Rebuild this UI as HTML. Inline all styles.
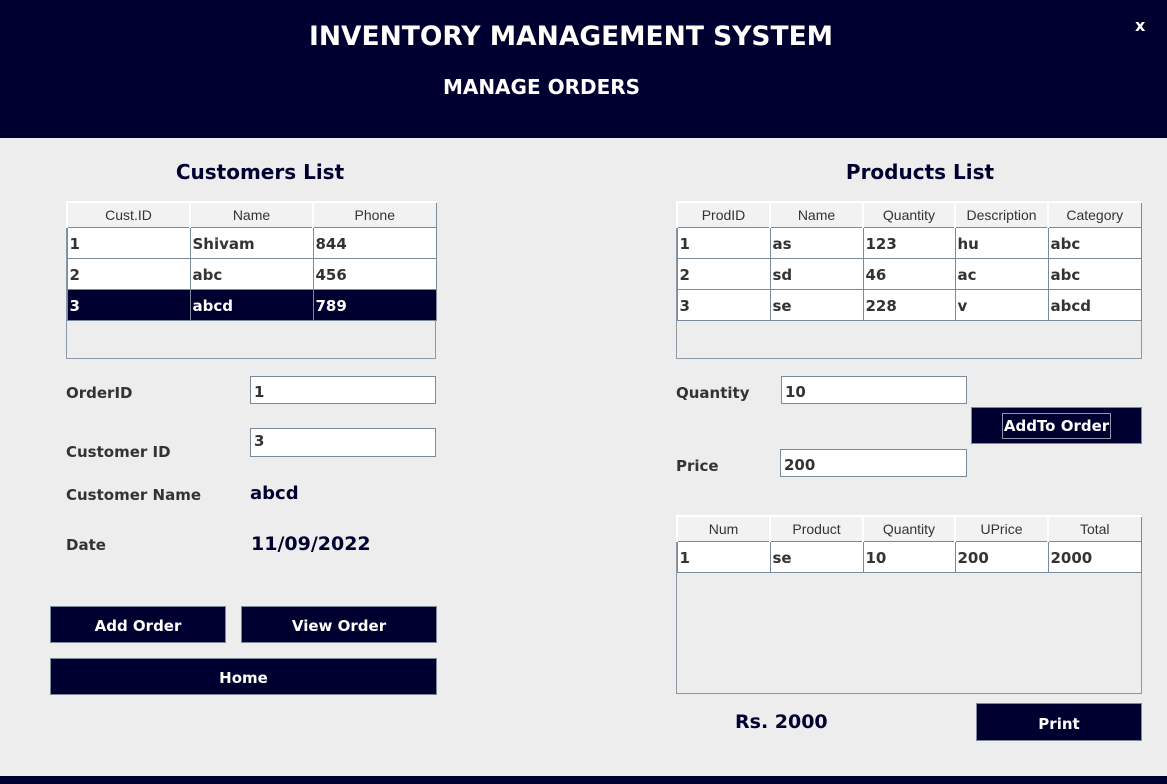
<!DOCTYPE html>
<html><head><style>
*{margin:0;padding:0;box-sizing:border-box}
body{width:1167px;height:784px;background:#ededed;position:relative;overflow:hidden;font-family:"DejaVu Sans","Liberation Sans",sans-serif}
.a{position:absolute}
.hdr{left:0;top:0;width:1167px;height:138px;background:#000030}
.t1{color:#fff;font-weight:bold;font-size:26.5px;left:0;width:1142px;text-align:center;top:21px}
.t2{color:#fff;font-weight:bold;font-size:20px;left:0;width:1083px;text-align:center;top:75px}
.lbl{color:#333;font-weight:bold;font-size:15px}
.h2{color:#000030;font-weight:bold;font-size:20px;text-align:center}
.inp{background:#fff;border:1px solid #7a8a9a;font-weight:bold;font-size:15px;color:#333;padding:7px 3px 0;line-height:16px}
.btn{background:#000030;border:1px solid #7a8a9a;color:#fff;font-weight:bold;font-size:15px;text-align:center}
table{border-collapse:collapse;position:absolute;table-layout:fixed}
td,th{border:1px solid #7a8a9a;overflow:hidden;white-space:nowrap}
th{background:#f2f2f2;font-family:"Liberation Sans",sans-serif;font-weight:normal;font-size:14px;color:#333;height:25px;border-top:2px solid #fff;border-left:2px solid #fff}
td{background:#fff;font-weight:bold;font-size:15px;color:#333;height:31px;padding-left:2px;padding-top:2px}
tr.sel td{background:#000030;color:#fff}
.box{border:1px solid #8a98a8;background:#ededed}
</style></head><body>
<div class="a hdr"></div>
<div class="a t1">INVENTORY MANAGEMENT SYSTEM</div>
<div class="a t2">MANAGE ORDERS</div>
<div class="a" style="color:#fff;font-weight:bold;font-size:16px;left:1135px;top:16px">x</div>

<div class="a h2" style="left:66px;width:388px;top:160px">Customers List</div>
<div class="a h2" style="left:700px;width:440px;top:160px">Products List</div>

<div class="a box" style="left:66px;top:201px;width:370px;height:158px"></div>
<table style="left:66px;top:201px;width:369px">
<col style="width:123px"><col style="width:123px"><col style="width:123px">
<tr><th>Cust.ID</th><th>Name</th><th>Phone</th></tr>
<tr><td>1</td><td>Shivam</td><td>844</td></tr>
<tr><td>2</td><td>abc</td><td>456</td></tr>
<tr class="sel"><td>3</td><td>abcd</td><td>789</td></tr>
</table>

<div class="a box" style="left:676px;top:201px;width:466px;height:158px"></div>
<table style="left:676px;top:201px;width:464px">
<col style="width:93px"><col style="width:93px"><col style="width:92px"><col style="width:93px"><col style="width:93px">
<tr><th>ProdID</th><th>Name</th><th>Quantity</th><th>Description</th><th>Category</th></tr>
<tr><td>1</td><td>as</td><td>123</td><td>hu</td><td>abc</td></tr>
<tr><td>2</td><td>sd</td><td>46</td><td>ac</td><td>abc</td></tr>
<tr><td>3</td><td>se</td><td>228</td><td>v</td><td>abcd</td></tr>
</table>

<div class="a lbl" style="left:66px;top:384px">OrderID</div>
<div class="a inp" style="left:250px;top:376px;width:186px;height:28px">1</div>
<div class="a lbl" style="left:66px;top:443px">Customer ID</div>
<div class="a inp" style="left:250px;top:428px;width:186px;height:29px;padding-top:4px">3</div>
<div class="a lbl" style="left:66px;top:486px">Customer Name</div>
<div class="a" style="left:250px;top:483px;font-weight:bold;font-size:18px;color:#000030">abcd</div>
<div class="a lbl" style="left:66px;top:536px">Date</div>
<div class="a" style="left:251px;top:533px;font-weight:bold;font-size:19px;color:#000030">11/09/2022</div>

<div class="a btn" style="left:50px;top:606px;width:176px;height:37px;line-height:38px">Add Order</div>
<div class="a btn" style="left:241px;top:606px;width:196px;height:37px;line-height:38px">View Order</div>
<div class="a btn" style="left:50px;top:658px;width:387px;height:37px;line-height:38px">Home</div>

<div class="a lbl" style="left:676px;top:384px">Quantity</div>
<div class="a inp" style="left:781px;top:376px;width:186px;height:28px">10</div>
<div class="a btn" style="left:971px;top:407px;width:171px;height:37px;"><span style="display:inline-block;margin-top:5px;border:1px solid #8a98a8;padding:0 1px;line-height:24px">AddTo Order</span></div>
<div class="a lbl" style="left:676px;top:457px">Price</div>
<div class="a inp" style="left:780px;top:449px;width:187px;height:28px">200</div>

<div class="a box" style="left:676px;top:515px;width:466px;height:179px"></div>
<table style="left:676px;top:515px;width:464px">
<col style="width:93px"><col style="width:93px"><col style="width:92px"><col style="width:93px"><col style="width:93px">
<tr><th>Num</th><th>Product</th><th>Quantity</th><th>UPrice</th><th>Total</th></tr>
<tr><td style="height:30px">1</td><td>se</td><td>10</td><td>200</td><td>2000</td></tr>
</table>

<div class="a" style="left:735px;top:711px;font-weight:bold;font-size:19px;color:#000030">Rs. 2000</div>
<div class="a btn" style="left:976px;top:703px;width:166px;height:38px;line-height:40px">Print</div>

<div class="a" style="left:0;top:776px;width:1167px;height:8px;background:#000030"></div>
</body></html>
